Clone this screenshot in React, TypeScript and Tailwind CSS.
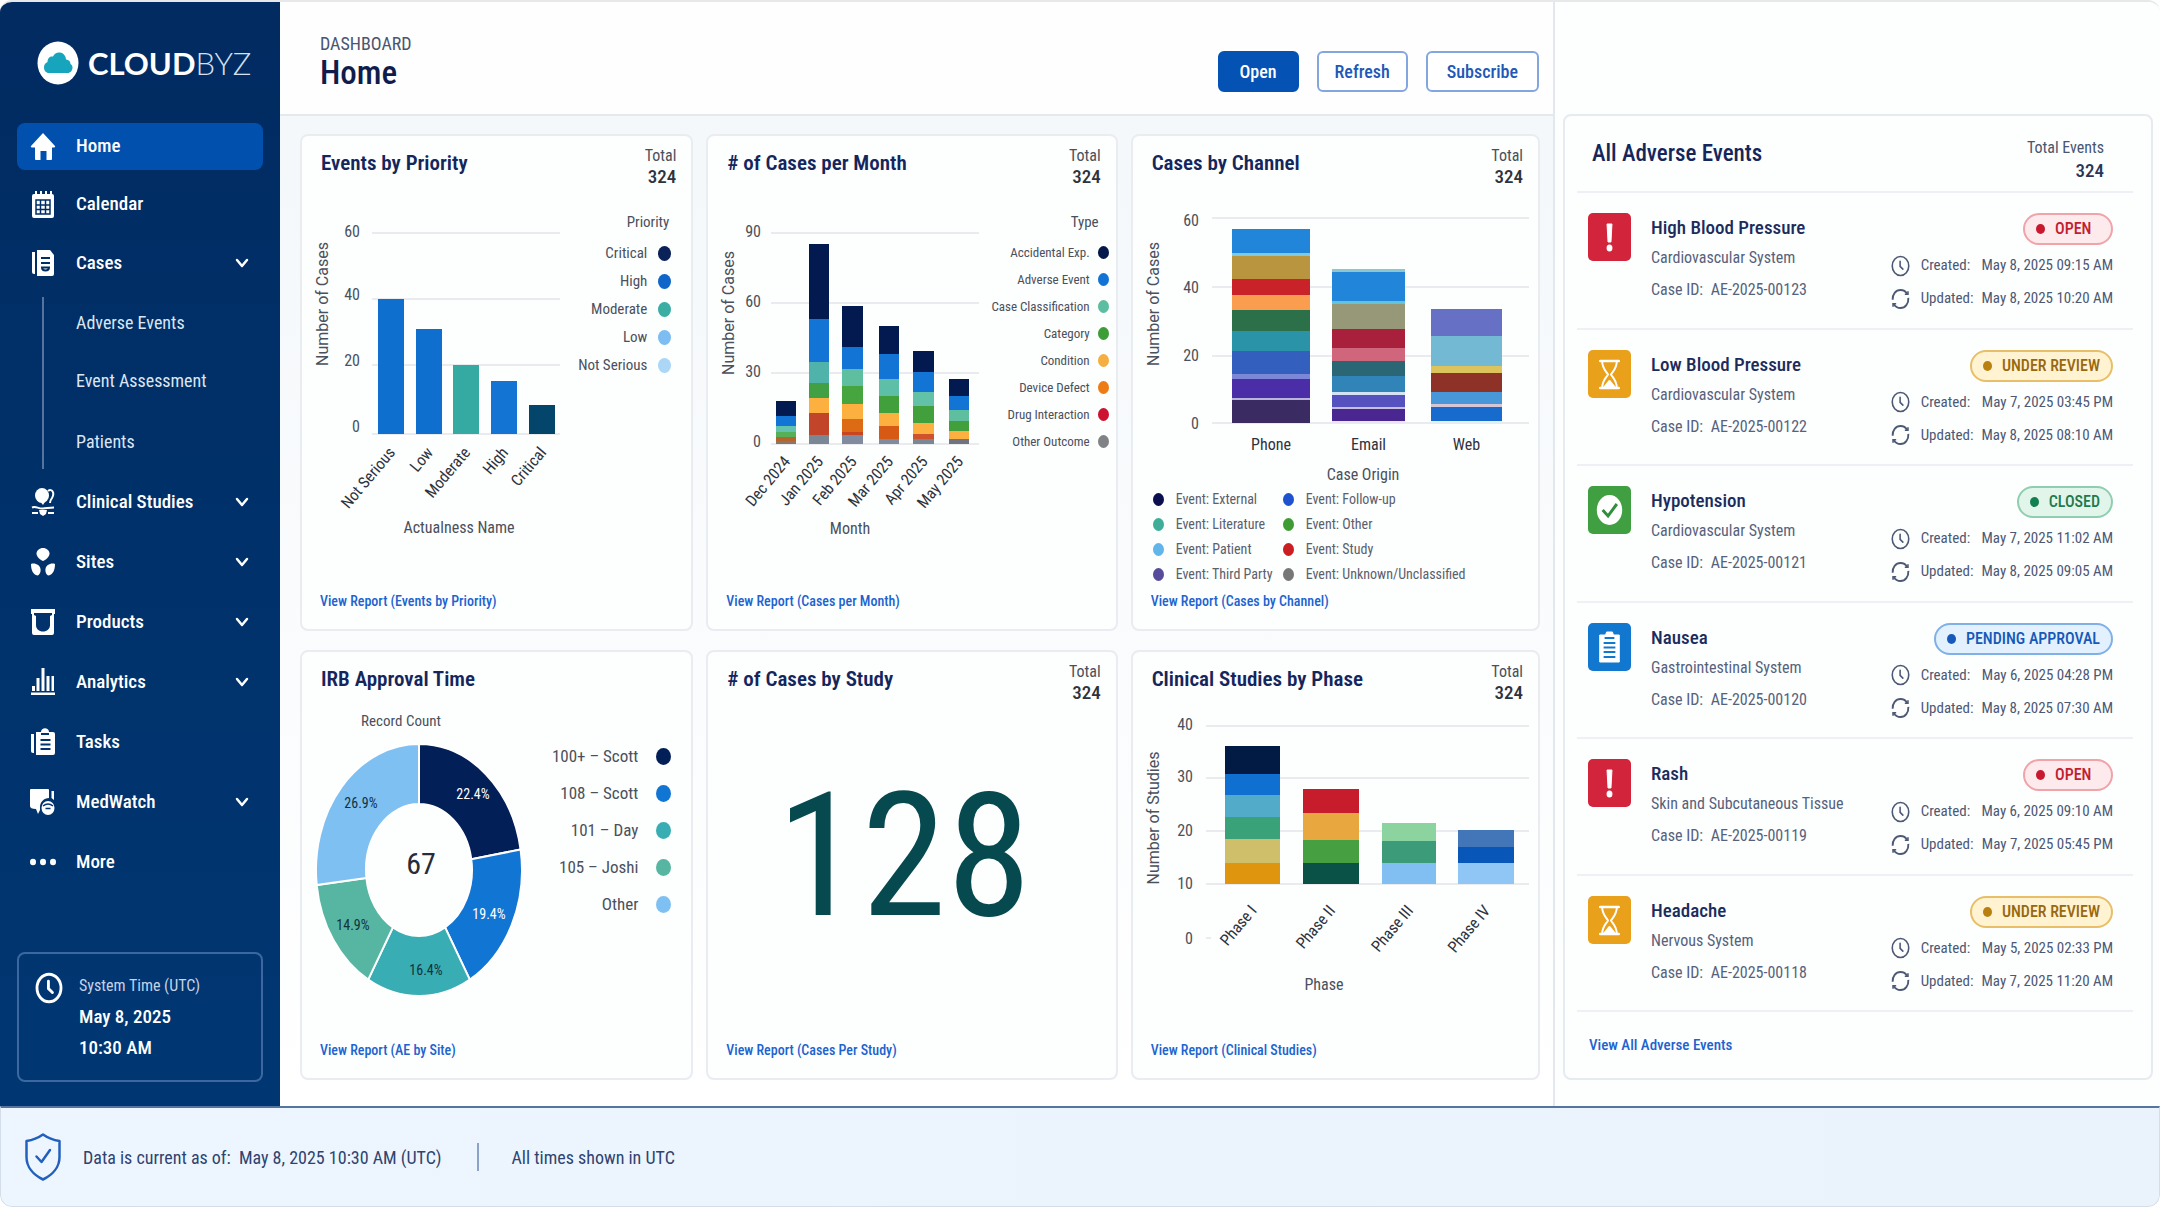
import React from "react";

type Segment = [top: number, color: string];

interface Bar {
  label: string;
  x: number;
  width: number;
  segments: Segment[];
}

interface ChartProps {
  title: string;
  width: number;
  height: number;
  baseline: number;
  grid: { y: number; from: number; to: number }[];
  ticks: { label: string; x: number; y: number }[];
  yLabel: string;
  yLabelPos: number;
  xLabel: string;
  xLabelPos: [number, number];
  bars: Bar[];
  slanted?: boolean;
  labelY: number;
}

const StackedBarChart: React.FC<ChartProps> = ({
  title,
  width,
  height,
  baseline,
  grid,
  ticks,
  yLabel,
  yLabelPos,
  xLabel,
  xLabelPos,
  bars,
  slanted = true,
  labelY,
}) => (
  <svg
    role="img"
    aria-label={title}
    width={width}
    height={height}
    viewBox={`2 0 ${width} ${height}`}
    className="shrink-0 overflow-visible fill-[#4a505c] text-[16px]"
  >
    {grid.map((line) => (
      <line
        key={line.y}
        x1={line.from}
        x2={line.to}
        y1={line.y}
        y2={line.y}
        stroke="#e9ebee"
        strokeWidth="2"
      />
    ))}
    {ticks.map((tick) => (
      <text key={tick.label} x={tick.x + 1} y={tick.y + 6} textAnchor="end">
        {tick.label}
      </text>
    ))}
    <text
      transform={`translate(28 ${yLabelPos}) rotate(-90)`}
      textAnchor="middle"
      className="font-['Roboto',sans-serif]"
    >
      {yLabel}
    </text>
    {bars.map((bar) => (
      <g key={bar.label}>
        {bar.segments.map(([top, color], i) => {
          const end =
            i + 1 < bar.segments.length ? bar.segments[i + 1][0] : baseline;
          return (
            <rect
              key={top}
              x={bar.x}
              y={top}
              width={bar.width}
              height={end - top}
              fill={color}
            />
          );
        })}
        {slanted ? (
          <text
            transform={`translate(${bar.x + bar.width / 2 + 5} ${labelY}) rotate(-50)`}
            textAnchor="end"
            className="fill-[#2d323c]"
          >
            {bar.label}
          </text>
        ) : (
          <text
            x={bar.x + bar.width / 2}
            y={labelY}
            textAnchor="middle"
            className="fill-[#2d323c]"
          >
            {bar.label}
          </text>
        )}
      </g>
    ))}
    <text x={xLabelPos[0]} y={xLabelPos[1] + 6} textAnchor="middle">
      {xLabel}
    </text>
  </svg>
);

const SLICES = [
  { value: 22.4, color: "#021f57", text: "#ffffff", x: 173, y: 88 },
  { value: 19.4, color: "#1175d3", text: "#ffffff", x: 189, y: 208 },
  { value: 16.4, color: "#38adb3", text: "#12323c", x: 126, y: 264 },
  { value: 14.9, color: "#57b6a2", text: "#12323c", x: 53, y: 219 },
  { value: 26.9, color: "#7fc0f2", text: "#12323c", x: 61, y: 97 },
];

const CX = 119;
const CY = 164;

const point = (share: number, rx: number, ry: number) => {
  const angle = (share / 100) * Math.PI * 2;
  return `${(CX + rx * Math.sin(angle)).toFixed(1)} ${(CY - ry * Math.cos(angle)).toFixed(1)}`;
};

const DonutChart: React.FC = () => {
  let start = 0;
  return (
    <svg
      role="img"
      aria-label="IRB Approval Time"
      width="240"
      height="300"
      viewBox="2 0 240 300"
      className="shrink-0 overflow-visible"
    >
      <text
        x="101"
        y="20"
        textAnchor="middle"
        className="fill-[#4a505c] text-[15px]"
      >
        Record Count
      </text>
      {SLICES.map((slice) => {
        const end = start + slice.value;
        const d = `M${point(start, 103, 126)} A103 126 0 0 1 ${point(end, 103, 126)} L${point(end, 53, 66)} A53 66 0 0 0 ${point(start, 53, 66)} Z`;
        start = end;
        return (
          <g key={slice.value}>
            <path d={d} fill={slice.color} stroke="#fff" strokeWidth="2" />
            <text
              x={slice.x}
              y={slice.y + 5}
              textAnchor="middle"
              fill={slice.text}
              className="text-[14px]"
            >
              {slice.value}%
            </text>
          </g>
        );
      })}
      <text
        x="121"
        y="168"
        textAnchor="middle"
        className="fill-[#272c3a] text-[30px]"
      >
        67
      </text>
    </svg>
  );
};

interface LegendItem {
  label: string;
  color: string;
}

const Dot: React.FC<{ color: string; className: string }> = ({
  color,
  className,
}) => (
  <span
    className={`shrink-0 rounded-[50%] ${className}`}
    style={{ backgroundColor: color }}
  />
);

const CardShell: React.FC<{
  title: string;
  total?: boolean;
  link: string;
  children: React.ReactNode;
}> = ({ title, total = true, link, children }) => (
  <section className="flex flex-col rounded-lg border-2 border-[#e9edf1] bg-[#fdfefe]">
    <header className="flex h-[54px] shrink-0 items-start justify-between pt-[9px] pr-[15px] pl-[19px]">
      <h2 className="pt-1 text-[21px]/[28px] font-semibold text-[#14265c]">
        {title}
      </h2>
      {total && (
        <p className="text-right text-[16px]/[22px] text-[#4a505c]">
          Total
          <br />
          <span className="text-[19px]/[20px] font-medium text-[#2d323c]">
            324
          </span>
        </p>
      )}
    </header>
    <div className="flex flex-1 flex-col">{children}</div>
    <footer className="px-[18px] pb-4">
      <a
        href="#report"
        className="text-[14px]/[24px] font-medium text-[#2063cf]"
      >
        {link}
      </a>
    </footer>
  </section>
);

const PRIORITIES: LegendItem[] = [
  { label: "Critical", color: "#0a2258" },
  { label: "High", color: "#0f66c8" },
  { label: "Moderate", color: "#3aaea3" },
  { label: "Low", color: "#7dbdf2" },
  { label: "Not Serious", color: "#abd6f5" },
];

const TYPES: LegendItem[] = [
  { label: "Accidental Exp.", color: "#03184a" },
  { label: "Adverse Event", color: "#1173d6" },
  { label: "Case Classification", color: "#5cbda0" },
  { label: "Category", color: "#3c9c35" },
  { label: "Condition", color: "#f5ae42" },
  { label: "Device Defect", color: "#ee7b14" },
  { label: "Drug Interaction", color: "#cc1230" },
  { label: "Other Outcome", color: "#808285" },
];

const CHANNEL_EVENTS: LegendItem[] = [
  { label: "Event: External", color: "#0a0f4f" },
  { label: "Event: Follow-up", color: "#1f52cf" },
  { label: "Event: Literature", color: "#3fae98" },
  { label: "Event: Other", color: "#3f9c35" },
  { label: "Event: Patient", color: "#62b5e8" },
  { label: "Event: Study", color: "#cb1e22" },
  { label: "Event: Third Party", color: "#574b9c" },
  { label: "Event: Unknown/Unclassified", color: "#777777" },
];

const SITES: LegendItem[] = [
  { label: "100+ – Scott", color: "#021f57" },
  { label: "108 – Scott", color: "#1175d3" },
  { label: "101 – Day", color: "#38adb3" },
  { label: "105 – Joshi", color: "#57b6a2" },
  { label: "Other", color: "#7fc0f2" },
];

const PRIORITY_BARS: Bar[] = [
  { label: "Not Serious", x: 78, width: 26, segments: [[109, "#0f6fce"]] },
  { label: "Low", x: 116, width: 26, segments: [[139, "#0f6fce"]] },
  { label: "Moderate", x: 153, width: 26, segments: [[175, "#35aaa2"]] },
  { label: "High", x: 191, width: 26, segments: [[191, "#1474d4"]] },
  { label: "Critical", x: 229, width: 26, segments: [[215, "#04466b"]] },
];

const MONTH_BARS: Bar[] = [
  {
    label: "Dec 2024",
    x: 70,
    width: 20,
    segments: [
      [211, "#021a4f"],
      [226, "#1274d5"],
      [236, "#62c2ae"],
      [242, "#56b058"],
      [247, "#b5652c"],
      [251, "#8b7468"],
    ],
  },
  {
    label: "Jan 2025",
    x: 103,
    width: 20,
    segments: [
      [54, "#021a4f"],
      [129, "#1274d5"],
      [172, "#4fb3ab"],
      [193, "#419f44"],
      [208, "#fbb040"],
      [223, "#c2452a"],
      [245, "#7b8794"],
    ],
  },
  {
    label: "Feb 2025",
    x: 136,
    width: 21,
    segments: [
      [116, "#021a4f"],
      [157, "#1274d5"],
      [179, "#5ebfa0"],
      [196, "#47a53f"],
      [214, "#fbb040"],
      [229, "#dd6a14"],
      [242, "#c8451f"],
      [245, "#808ba0"],
    ],
  },
  {
    label: "Mar 2025",
    x: 173,
    width: 20,
    segments: [
      [136, "#021a4f"],
      [164, "#1274d5"],
      [189, "#5ebfa8"],
      [206, "#419f3c"],
      [223, "#fbb040"],
      [236, "#d65a14"],
      [249, "#808ba0"],
    ],
  },
  {
    label: "Apr 2025",
    x: 207,
    width: 21,
    segments: [
      [161, "#021a4f"],
      [182, "#1274d5"],
      [202, "#62c2a8"],
      [216, "#419f3c"],
      [233, "#fbb040"],
      [244, "#d0522a"],
      [249, "#7b8794"],
    ],
  },
  {
    label: "May 2025",
    x: 243,
    width: 20,
    segments: [
      [189, "#021a4f"],
      [206, "#1274d5"],
      [220, "#5ebfa0"],
      [231, "#419f3c"],
      [241, "#fbb040"],
      [249, "#6f7480"],
    ],
  },
];

const CHANNEL_BARS: Bar[] = [
  {
    label: "Phone",
    x: 101,
    width: 78,
    segments: [
      [39, "#2185da"],
      [63, "#7cc9e8"],
      [66, "#b9953f"],
      [89, "#c92228"],
      [105, "#fb9d4f"],
      [120, "#2b7048"],
      [141, "#2b93a8"],
      [161, "#335fbf"],
      [184, "#7d87d8"],
      [189, "#4c2da8"],
      [208, "#b9b5dc"],
      [210, "#3a2c63"],
    ],
  },
  {
    label: "Email",
    x: 201,
    width: 73,
    segments: [
      [79, "#8cc7cf"],
      [82, "#2185da"],
      [111, "#62c3dc"],
      [114, "#979878"],
      [139, "#a9203d"],
      [158, "#cf667c"],
      [171, "#2b6674"],
      [186, "#3184b8"],
      [202, "#d3e2f5"],
      [205, "#5552c0"],
      [217, "#c6bfe2"],
      [219, "#4a2691"],
      [231, "#e9e6f2"],
    ],
  },
  {
    label: "Web",
    x: 300,
    width: 71,
    segments: [
      [119, "#6670c4"],
      [146, "#74b9d3"],
      [176, "#dcc35c"],
      [183, "#8e3126"],
      [202, "#4897d8"],
      [214, "#d5c5d5"],
      [217, "#176bcc"],
      [231, "#e6eef6"],
    ],
  },
];

const PHASE_BARS: Bar[] = [
  {
    label: "Phase I",
    x: 94,
    width: 55,
    segments: [
      [40, "#021b44"],
      [68, "#0f70d2"],
      [89, "#52abc8"],
      [111, "#3aa279"],
      [133, "#cfbf6a"],
      [157, "#e0950f"],
    ],
  },
  {
    label: "Phase II",
    x: 172,
    width: 56,
    segments: [
      [83, "#c61c2c"],
      [107, "#e9a740"],
      [134, "#469f40"],
      [157, "#0a5248"],
    ],
  },
  {
    label: "Phase III",
    x: 251,
    width: 54,
    segments: [
      [117, "#8bd4a0"],
      [135, "#3c9b78"],
      [157, "#81bff2"],
    ],
  },
  {
    label: "Phase IV",
    x: 327,
    width: 56,
    segments: [
      [124, "#4276b8"],
      [141, "#0857b8"],
      [157, "#8fc6f5"],
    ],
  },
];

type Status = "OPEN" | "UNDER REVIEW" | "CLOSED" | "PENDING APPROVAL";

interface AdverseEvent {
  name: string;
  system: string;
  caseId: string;
  status: Status;
  created: string;
  updated: string;
}

const EVENTS: AdverseEvent[] = [
  {
    name: "High Blood Pressure",
    system: "Cardiovascular System",
    caseId: "AE-2025-00123",
    status: "OPEN",
    created: "May 8, 2025 09:15 AM",
    updated: "May 8, 2025 10:20 AM",
  },
  {
    name: "Low Blood Pressure",
    system: "Cardiovascular System",
    caseId: "AE-2025-00122",
    status: "UNDER REVIEW",
    created: "May 7, 2025 03:45 PM",
    updated: "May 8, 2025 08:10 AM",
  },
  {
    name: "Hypotension",
    system: "Cardiovascular System",
    caseId: "AE-2025-00121",
    status: "CLOSED",
    created: "May 7, 2025 11:02 AM",
    updated: "May 8, 2025 09:05 AM",
  },
  {
    name: "Nausea",
    system: "Gastrointestinal System",
    caseId: "AE-2025-00120",
    status: "PENDING APPROVAL",
    created: "May 6, 2025 04:28 PM",
    updated: "May 8, 2025 07:30 AM",
  },
  {
    name: "Rash",
    system: "Skin and Subcutaneous Tissue",
    caseId: "AE-2025-00119",
    status: "OPEN",
    created: "May 6, 2025 09:10 AM",
    updated: "May 7, 2025 05:45 PM",
  },
  {
    name: "Headache",
    system: "Nervous System",
    caseId: "AE-2025-00118",
    status: "UNDER REVIEW",
    created: "May 5, 2025 02:33 PM",
    updated: "May 7, 2025 11:20 AM",
  },
];

const STATUS_STYLES: Record<
  Status,
  { badge: string; dot: string; tile: string; glyph: React.ReactNode }
> = {
  OPEN: {
    badge: "border-[#f0a3a9] bg-[#fdeaec] text-[#c2202f]",
    dot: "bg-[#c8192e]",
    tile: "bg-[#d2243a]",
    glyph: (
      <>
        <path d="M19.5 11h5l-1 18h-3z" fill="#fff" stroke="#fff" strokeLinejoin="round" />
        <ellipse cx="22" cy="35" rx="3" ry="3.5" fill="#fff" />
      </>
    ),
  },
  "UNDER REVIEW": {
    badge: "border-[#e8bf68] bg-[#fff3d2] text-[#98680f]",
    dot: "bg-[#b9800f]",
    tile: "bg-[#e9a01b]",
    glyph: (
      <g fill="none" stroke="#fff" strokeWidth="2" strokeLinejoin="round">
        <path d="M12.5 11h19M12.5 38h19" strokeWidth="2.5" strokeLinecap="round" />
        <path d="M14.500 11c0 7 3 9 6 13.500c-3 4.500-6 6.500-6 13.500M29.500 11c0 7-3 9-6 13.500c3 4.500 6 6.500 6 13.500" />
        <path d="M17 37l5-6 5 6z" fill="#fff" />
      </g>
    ),
  },
  CLOSED: {
    badge: "border-[#8fceb0] bg-[#e2f5eb] text-[#1f7a4c]",
    dot: "bg-[#128050]",
    tile: "bg-[#409f40]",
    glyph: (
      <>
        <ellipse cx="22" cy="24" rx="13" ry="15" fill="#fff" />
        <path d="M15 24l5.500 6 9-12" fill="none" stroke="#2f8f3a" strokeWidth="3" />
      </>
    ),
  },
  "PENDING APPROVAL": {
    badge: "border-[#7fb0e8] bg-[#e3f0fd] text-[#1659b8]",
    dot: "bg-[#1659b8]",
    tile: "bg-[#1278cf]",
    glyph: (
      <>
        <path d="M12 12h6l1-3h6l1 3h6v27H12z" fill="#fff" stroke="#fff" strokeLinejoin="round" />
        <path d="M17 15h10M16 20h12M16 24.500h12M16 29h12M16 34h12" stroke="#1278cf" strokeWidth="2" />
      </>
    ),
  },
};

const ClockIcon: React.FC<{ className: string; strokeWidth: number }> = ({
  className,
  strokeWidth,
}) => (
  <svg
    viewBox="0 0 24 28"
    fill="none"
    stroke="currentColor"
    strokeWidth={strokeWidth}
    strokeLinecap="round"
    className={className}
  >
    <ellipse cx="12" cy="14" rx="10.500" ry="12" />
    <path d="M11.500 8v6.500l3.500 3.500" />
  </svg>
);

const SyncIcon: React.FC<{ className: string }> = ({ className }) => (
  <svg
    viewBox="0 0 24 28"
    fill="none"
    stroke="currentColor"
    strokeWidth="2.400"
    className={className}
  >
    <path d="M2 15c-.5-7 4-12.500 10-12.500 3.500 0 6.500 1.500 8.500 5M22 12.500c.5 7.500-4 13-10 13-3.500 0-6.500-1.500-8.500-5" />
    <path d="M21.500 4v4h-4M2.500 24v-4h4" strokeWidth="2" />
  </svg>
);

const EventRow: React.FC<{ event: AdverseEvent }> = ({ event }) => {
  const style = STATUS_STYLES[event.status];
  return (
    <li className="flex flex-1 items-start border-t-2 border-[#edf0f4] pt-5 pr-5 pl-[11px]">
      <svg
        viewBox="0 0 44 48"
        preserveAspectRatio="none"
        className={`h-12 w-[43px] shrink-0 rounded-[5px] ${style.tile}`}
      >
        {style.glyph}
      </svg>
      <div className="flex-1 pl-5 text-[16px] text-[#56627c]">
        <h3 className="text-[19px]/[30px] font-medium text-[#1b2c5c]">
          {event.name}
        </h3>
        <p className="leading-[30px]">{event.system}</p>
        <p className="leading-[33px]">
          Case ID: <span className="ml-1">{event.caseId}</span>
        </p>
      </div>
      <div className="flex flex-col items-end text-[15px] text-[#4c5874]">
        <span
          className={`flex h-8 min-w-[90px] items-center gap-[10px] rounded-full border-2 px-[11px] text-[16px] font-medium ${style.badge}`}
        >
          <span className={`h-[10px] w-[9px] rounded-[50%] ${style.dot}`} />
          {event.status}
        </span>
        <dl className="mt-1 grid grid-cols-[20px_auto_auto] items-center leading-[33px]">
          <ClockIcon className="h-[22px] w-[19px]" strokeWidth={2} />
          <dt className="pr-2 pl-[10px]">Created:</dt>
          <dd className="text-right">{event.created}</dd>
          <SyncIcon className="h-[22px] w-[19px]" />
          <dt className="pr-2 pl-[10px]">Updated:</dt>
          <dd className="text-right">{event.updated}</dd>
        </dl>
      </div>
    </li>
  );
};

const ICONS: Record<string, React.ReactNode> = {
  Home: (
    <path d="M12 0L24 13c.4.6 0 1.500-.8 1.500H21V26a1 1 0 0 1-1 1h-4.500v-9h-6v9H5a1 1 0 0 1-1-1V14.500H.8C0 14.500-.4 13.600 0 13z" />
  ),
  Calendar: (
    <>
      <path d="M1 5a2 2 0 0 1 2-2h1V0h2v3h3V0h2v3h3V0h2v3h3V0h2v3a2 2 0 0 1 2 2v20a2 2 0 0 1-2 2H3a2 2 0 0 1-2-2z" />
      <path
        d="M5 9h14v14H5zM5 14h14M5 18.500h14M9.500 9v14M14.500 9v14"
        fill="none"
        stroke="#012d66"
        strokeWidth="1.500"
      />
    </>
  ),
  Cases: (
    <>
      <path d="M1 3h3v22H3a2 2 0 0 1-2-2z" />
      <path d="M6 1h13l4 5v19a2 2 0 0 1-2 2H6z" />
      <path
        d="M10 9h9M10 14h9M11 18.500c0 2 1.500 3 3.500 3s3.500-1 3.500-3z"
        fill="none"
        stroke="#012d66"
        strokeWidth="2"
      />
    </>
  ),
  "Clinical Studies": (
    <>
      <ellipse cx="11" cy="7.500" rx="7" ry="7.500" />
      <path
        d="M17 3c4-3 7 2 4 7-1.500 2-2 3-2 5M1 19.500c4-2 6 1.500 11 1s7-1 11-1M1 25h6M17 25h6"
        fill="none"
        stroke="currentColor"
        strokeWidth="2"
      />
      <path d="M8 22h8l-1 4-3 2-3-2zM8 12h7l-3 5z" />
    </>
  ),
  Sites: (
    <>
      <path d="M12 0c3.500 0 6.500 2.500 6.500 5.500S15 12 12 13c-3-1-6.500-4.500-6.500-7.500S8.500 0 12 0z" />
      <path d="M0 16c4-1.500 9 1 9.500 5 .5 3-1 6-3 6.500C2 26.500 0 22 0 16zM24 16c-4-1.500-9 1-9.500 5-.5 3 1 6 3 6.500 4.500-1 6.500-5.500 6.500-11.500z" />
    </>
  ),
  Products: (
    <>
      <path d="M0 1h24v5h-1v19a2 2 0 0 1-2 2H3a2 2 0 0 1-2-2V6H0z" />
      <path d="M3 5h18v2l-2 1v9c0 4-3 6.500-7 6.500S5 21 5 17V8L3 7z" fill="#01326c" />
    </>
  ),
  Analytics: (
    <path d="M0 24.500h24V27H0zM1 18h3v5H1zM5.500 10h3v13h-3zM10.500 0h3v23h-3zM15.500 8h3v15h-3zM20.500 8h2.500v15h-2.500z" />
  ),
  Tasks: (
    <>
      <path d="M0 6h3v19H2a2 2 0 0 1-2-2z" />
      <path d="M5 4h5c0-5 8-5 8 0h4a2 2 0 0 1 2 2v19a2 2 0 0 1-2 2H5z" />
      <path
        d="M10 6h8M9.500 12h10M9.500 16.500h10M9.500 21h10"
        stroke="#01346e"
        strokeWidth="2"
      />
    </>
  ),
  MedWatch: (
    <>
      <path d="M0 1h17a1 1 0 0 1 1 1v8c-5 0-9 4-9 9v3l-2 4-2-5c-4 0-6-1-6-3V2a1 1 0 0 1 1-1zM20.500 3H23v9l-2.500-2z" />
      <ellipse cx="17" cy="20" rx="6.500" ry="7" />
      <path d="M12 18c3-2.500 7-2.500 10 0M14.500 20.500h5" fill="none" stroke="#01346e" strokeWidth="1.500" />
    </>
  ),
  More: (
    <>
      <ellipse cx="2" cy="14" rx="3" ry="3.200" />
      <ellipse cx="12" cy="14" rx="3" ry="3.200" />
      <ellipse cx="22" cy="14" rx="3" ry="3.200" />
    </>
  ),
};

const NavIcon: React.FC<{ name: string }> = ({ name }) => (
  <svg
    viewBox="0 0 24 28"
    fill="currentColor"
    className="h-[28px] w-6 shrink-0 overflow-visible"
  >
    {ICONS[name]}
  </svg>
);

const Chevron: React.FC = () => (
  <svg
    viewBox="0 0 14 10"
    fill="none"
    stroke="currentColor"
    strokeWidth="2.500"
    strokeLinecap="round"
    strokeLinejoin="round"
    className="ml-auto h-[10px] w-[14px]"
  >
    <path d="M2 2l5 6 5-6" />
  </svg>
);

const NavItem: React.FC<{
  name: string;
  expandable?: boolean;
  height?: string;
}> = ({ name, expandable, height = "h-[60px]" }) =>
  expandable ? (
    <button
      type="button"
      className={`flex ${height} w-full items-center gap-[21px] px-[14px]`}
    >
      <NavIcon name={name} />
      {name}
      <Chevron />
    </button>
  ) : (
    <a
      href={`#${name.toLowerCase()}`}
      className={`flex ${height} items-center gap-[21px] px-[14px]`}
    >
      <NavIcon name={name} />
      {name}
    </a>
  );

const Sidebar: React.FC = () => (
  <aside className="flex flex-col bg-linear-to-b from-[#012b61] to-[#003773] px-[17px] pb-6 text-white">
    <div className="flex h-[121px] items-center gap-[9px] pl-5">
      <svg viewBox="0 0 42 44" className="h-11 w-[42px] shrink-0">
        <ellipse cx="21" cy="22" rx="20.500" ry="21.500" fill="#fff" />
        <path
          d="M12 32c-3 0-5-2.500-5-5.500 0-2.500 1-4.500 3.500-5.500 0-4 2.500-6 5.500-5.500 1.500-3 4-4.500 7-4 3.500.5 6 3.500 6 7 3 .5 4.500 2 4.500 4.500 1.500 1 2 2 2 3.500 0 3-2 5.500-5 5.500z"
          fill="#16a5bd"
        />
      </svg>
      <p className="font-['Lato',sans-serif] text-[31px]/[40px]">
        <span className="font-bold">CLOUD</span>
        <span className="font-light text-[#d5e0f0]">BYZ</span>
      </p>
    </div>
    <nav className="text-[19px] font-medium">
      <div className="mb-[6px] rounded-lg bg-[#0250ad]">
        <NavItem name="Home" height="h-[47px]" />
      </div>
      <NavItem name="Calendar" height="h-[57px]" />
      <NavItem name="Cases" expandable />
      <ul className="mt-1 mb-[3px] ml-[25px] flex flex-col border-l-2 border-[#54749f] pl-8 text-[18px] font-normal text-[#dde6f3]">
        <li className="flex h-[50px] items-center">
          <a href="#adverse-events">Adverse Events</a>
        </li>
        <li className="flex h-[66px] items-center">
          <a href="#event-assessment">Event Assessment</a>
        </li>
        <li className="flex h-[56px] items-center">
          <a href="#patients">Patients</a>
        </li>
      </ul>
      <NavItem name="Clinical Studies" expandable />
      <NavItem name="Sites" expandable />
      <NavItem name="Products" expandable />
      <NavItem name="Analytics" expandable />
      <NavItem name="Tasks" />
      <NavItem name="MedWatch" expandable />
      <NavItem name="More" />
    </nav>
    <div className="mt-auto flex h-[130px] gap-4 rounded-lg border-2 border-[#3d689f] pt-[15px] pl-4">
      <ClockIcon className="mt-[3px] h-8 w-[28px] shrink-0" strokeWidth={2.5} />
      <p className="text-[19px]/[31px] font-medium">
        <span className="text-[16px]/[31px] font-normal text-[#c5d3e8]">
          System Time (UTC)
        </span>
        <br />
        May 8, 2025
        <br />
        10:30 AM
      </p>
    </div>
  </aside>
);

const ACTION =
  "flex h-[41px] items-center rounded-md border-2 text-[18px] font-medium";

export default function App() {
  return (
    <div className="flex min-h-screen flex-col overflow-hidden rounded-xl border-t-2 border-[#e6e8e9] bg-white font-['Roboto_Condensed','Roboto',sans-serif]">
      <div className="grid flex-1 grid-cols-[280px_1fr_607px]">
        <Sidebar />

        <main className="flex min-w-0 flex-col bg-linear-to-b from-[#f3f7fa] to-white">
          <header className="flex h-[114px] items-center justify-between border-b-2 border-[#e5e9ed] bg-[#fefefe] pr-[14px] pl-10">
            <div className="pt-2">
              <p className="text-[18px]/[22px] text-[#4a5570]">DASHBOARD</p>
              <h1 className="text-[33px]/[36px] font-medium text-[#101d4c]">
                Home
              </h1>
            </div>
            <div className="mt-[26px] flex gap-[18px]">
              <button
                type="button"
                className={`${ACTION} border-[#0552b5] bg-[#0552b5] px-5 text-white`}
              >
                Open
              </button>
              <button
                type="button"
                className={`${ACTION} border-[#83a6de] bg-white px-4 text-[#2158b8]`}
              >
                Refresh
              </button>
              <button
                type="button"
                className={`${ACTION} border-[#83a6de] bg-white px-[19px] text-[#2158b8]`}
              >
                Subscribe
              </button>
            </div>
          </header>

          <div className="grid flex-1 grid-cols-[393fr_411fr_409fr] grid-rows-[497fr_430fr] gap-x-[13px] gap-y-[19px] pt-[18px] pr-[13px] pb-[26px] pl-5">
            <CardShell
              title="Events by Priority"
              link="View Report (Events by Priority)"
            >
              <div className="flex justify-between pr-5">
                <StackedBarChart
                  title="Events by Priority"
                  width={262}
                  height={346}
                  baseline={244}
                  grid={[43, 109, 175, 244].map((y) => ({
                    y,
                    from: 72,
                    to: 260,
                  }))}
                  ticks={[
                    { label: "60", x: 59, y: 41 },
                    { label: "40", x: 59, y: 104 },
                    { label: "20", x: 59, y: 170 },
                    { label: "0", x: 59, y: 236 },
                  ]}
                  yLabel="Number of Cases"
                  yLabelPos={114}
                  xLabel="Actualness Name"
                  xLabelPos={[159, 337]}
                  bars={PRIORITY_BARS}
                  labelY={263}
                />
                <div className="pt-[18px] text-right text-[15px]/[28px] text-[#4a505c]">
                  <p className="mb-[3px] pr-[2px]">Priority</p>
                  <ul>
                    {PRIORITIES.map((item) => (
                      <li
                        key={item.label}
                        className="flex items-center justify-end gap-[11px]"
                      >
                        {item.label}
                        <Dot color={item.color} className="h-[15px] w-[13px]" />
                      </li>
                    ))}
                  </ul>
                </div>
              </div>
            </CardShell>

            <CardShell
              title="# of Cases per Month"
              link="View Report (Cases per Month)"
            >
              <div className="flex justify-between pr-[7px]">
                <StackedBarChart
                  title="# of Cases per Month"
                  width={276}
                  height={346}
                  baseline={254}
                  grid={[43, 113, 183, 254].map((y) => ({
                    y,
                    from: 65,
                    to: 273,
                  }))}
                  ticks={[
                    { label: "90", x: 54, y: 41 },
                    { label: "60", x: 54, y: 111 },
                    { label: "30", x: 54, y: 181 },
                    { label: "0", x: 54, y: 251 },
                  ]}
                  yLabel="Number of Cases"
                  yLabelPos={123}
                  xLabel="Month"
                  xLabelPos={[144, 338]}
                  bars={MONTH_BARS}
                  labelY={272}
                />
                <div className="pt-[18px] text-right text-[#4a505c]">
                  <p className="mb-[3px] pr-[10px] text-[15px]/[28px]">Type</p>
                  <ul className="text-[13px]/[27px]">
                    {TYPES.map((item) => (
                      <li
                        key={item.label}
                        className="flex items-center justify-end gap-2 whitespace-nowrap"
                      >
                        {item.label}
                        <Dot color={item.color} className="h-[13px] w-[11px]" />
                      </li>
                    ))}
                  </ul>
                </div>
              </div>
            </CardShell>

            <CardShell
              title="Cases by Channel"
              link="View Report (Cases by Channel)"
            >
              <StackedBarChart
                title="Cases by Channel"
                width={400}
                height={296}
                baseline={233}
                grid={[28, 97, 166, 233].map((y) => ({ y, from: 81, to: 398 }))}
                ticks={[
                  { label: "60", x: 67, y: 30 },
                  { label: "40", x: 67, y: 97 },
                  { label: "20", x: 67, y: 165 },
                  { label: "0", x: 67, y: 233 },
                ]}
                yLabel="Number of Cases"
                yLabelPos={114}
                xLabel="Case Origin"
                xLabelPos={[232, 284]}
                bars={CHANNEL_BARS}
                slanted={false}
                labelY={260}
              />
              <ul className="grid grid-cols-[130px_1fr] pt-px pl-5 text-[14px]/[25px] text-[#5a606c]">
                {CHANNEL_EVENTS.map((item) => (
                  <li
                    key={item.label}
                    className="flex items-center gap-3 whitespace-nowrap"
                  >
                    <Dot color={item.color} className="h-[13px] w-[11px]" />
                    {item.label}
                  </li>
                ))}
              </ul>
            </CardShell>

            <CardShell
              title="IRB Approval Time"
              total={false}
              link="View Report (AE by Site)"
            >
              <div className="flex justify-between pr-5">
                <DonutChart />
                <ul className="pt-8 text-right text-[17px]/[37px] text-[#4a505c]">
                  {SITES.map((item) => (
                    <li
                      key={item.label}
                      className="flex items-center justify-end gap-[18px] whitespace-nowrap"
                    >
                      {item.label}
                      <Dot color={item.color} className="h-[17px] w-[15px]" />
                    </li>
                  ))}
                </ul>
              </div>
            </CardShell>

            <CardShell
              title="# of Cases by Study"
              link="View Report (Cases Per Study)"
            >
              <p className="flex flex-1 items-center justify-center pr-4 pb-8 text-[172px]/[180px] text-[#064a50]">
                128
              </p>
            </CardShell>

            <CardShell
              title="Clinical Studies by Phase"
              link="View Report (Clinical Studies)"
            >
              <StackedBarChart
                title="Clinical Studies by Phase"
                width={400}
                height={296}
                baseline={178}
                grid={[
                  { y: 20, from: 75, to: 398 },
                  { y: 72, from: 75, to: 398 },
                  { y: 125, from: 75, to: 398 },
                  { y: 178, from: 75, to: 398 },
                  { y: 232, from: 75, to: 80 },
                ]}
                ticks={[
                  { label: "40", x: 61, y: 18 },
                  { label: "30", x: 61, y: 70 },
                  { label: "20", x: 61, y: 124 },
                  { label: "10", x: 61, y: 177 },
                  { label: "0", x: 61, y: 232 },
                ]}
                yLabel="Number of Studies"
                yLabelPos={112}
                xLabel="Phase"
                xLabelPos={[193, 278]}
                bars={PHASE_BARS}
                labelY={205}
              />
            </CardShell>
          </div>
        </main>

        <div className="flex flex-col border-l-2 border-[#e3e8ee] bg-[#fdfefe] pt-[112px] pr-[7px] pb-[26px] pl-2">
          <section className="flex flex-1 flex-col rounded-lg border-2 border-[#e6ebf0] pr-[18px] pl-3">
            <header className="flex h-[75px] items-start justify-between pt-[21px] pr-[29px] pl-[15px]">
              <h2 className="text-[23px]/[34px] font-medium text-[#14265c]">
                All Adverse Events
              </h2>
              <p className="text-right text-[16px]/[22px] text-[#4a5570]">
                Total Events
                <br />
                <span className="text-[19px]/[24px] font-medium text-[#2a3558]">
                  324
                </span>
              </p>
            </header>
            <ul className="flex flex-1 flex-col border-b-2 border-[#edf0f4]">
              {EVENTS.map((event) => (
                <EventRow key={event.caseId} event={event} />
              ))}
            </ul>
            <footer className="flex h-[66px] items-center pl-3">
              <a
                href="#adverse-events"
                className="text-[15px] font-medium text-[#2063cf]"
              >
                View All Adverse Events
              </a>
            </footer>
          </section>
        </div>
      </div>

      <footer className="flex h-[101px] items-center rounded-b-xl border border-t-2 border-[#d3deea] border-t-[#54759f] bg-linear-to-r from-[#edf6fe] to-[#eaf3fb] pl-6 text-[18px] text-[#2f4370]">
        <svg
          viewBox="0 0 36 48"
          fill="none"
          stroke="#2360bd"
          strokeWidth="2.500"
          strokeLinejoin="round"
          strokeLinecap="round"
          className="h-12 w-9"
        >
          <path d="M18 1.500C23 5 28 7 34.500 8v16c0 10-7 18-16.500 22.500C8.500 42 1.500 34 1.500 24V8C8 7 13 5 18 1.500z" />
          <path d="M11.500 23.500l5 5.500 8.500-12" />
        </svg>
        <p className="pl-[22px]">
          Data is current as of: <span className="ml-1">May 8, 2025 10:30 AM (UTC)</span>
        </p>
        <p className="ml-9 flex h-7 items-center border-l-2 border-[#8aa3c6] pl-8">
          All times shown in UTC
        </p>
      </footer>
    </div>
  );
}
